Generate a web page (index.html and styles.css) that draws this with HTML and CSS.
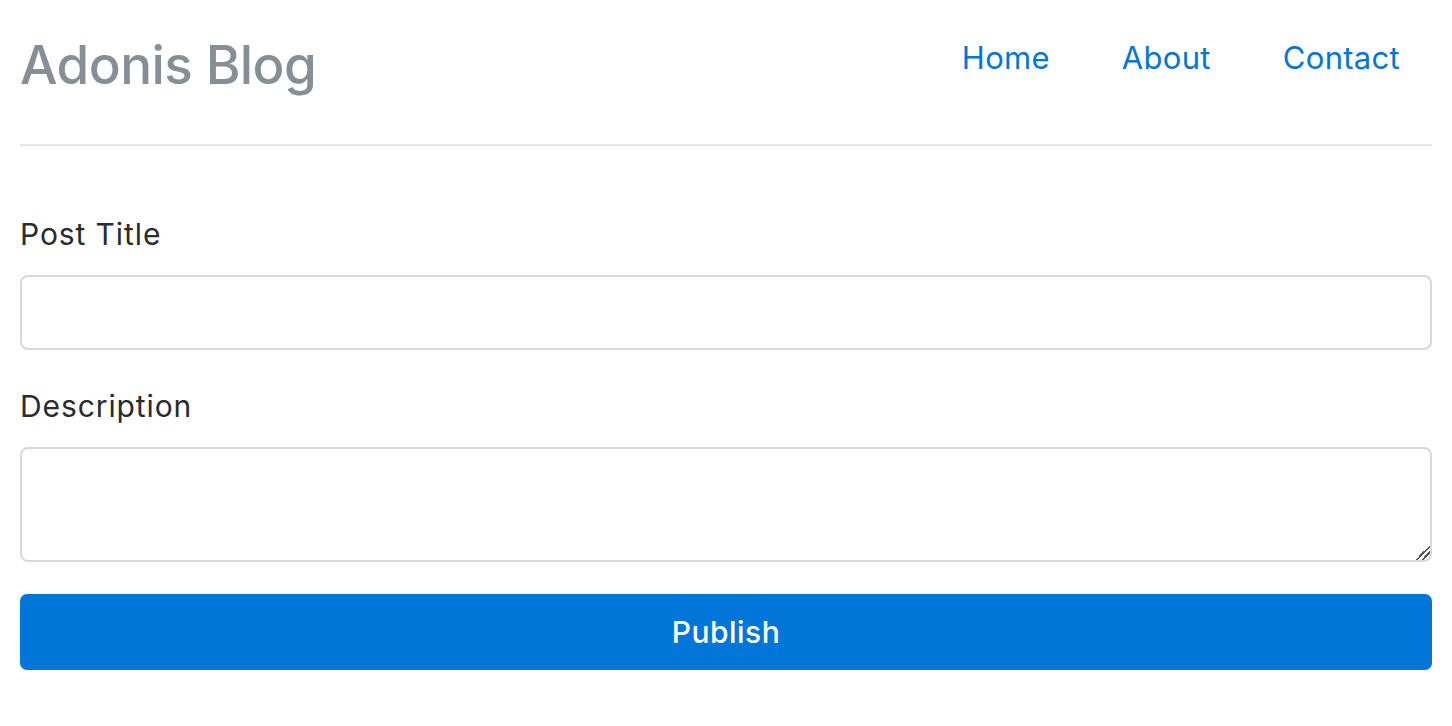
FILE: index.html
```html
<!DOCTYPE html>
<html>
<head>
<meta charset="utf-8">
<title>Adonis Blog</title>
<link rel="stylesheet" href="styles.css">
</head>
<body>
<div class="container">
  <header class="header">
    <h3 class="brand">Adonis Blog</h3>
    <nav class="nav">
      <a href="#" class="nav-link">Home</a>
      <a href="#" class="nav-link">About</a>
      <a href="#" class="nav-link">Contact</a>
    </nav>
  </header>
  <form class="form">
    <div class="group">
      <label class="label">Post Title</label>
      <input type="text" class="control">
    </div>
    <div class="group">
      <label class="label">Description</label>
      <textarea class="control area"></textarea>
    </div>
    <button type="button" class="btn">Publish</button>
  </form>
</div>
</body>
</html>
```
FILE: styles.css
```css
html, body {
  margin: 0;
  padding: 0;
  background: #fff;
}
body {
  font-family: Inter, "Noto Sans", "Liberation Sans", sans-serif;
  color: #292b2c;
}
.container {
  padding: 0 20px;
}
.header {
  display: flex;
  justify-content: space-between;
  align-items: flex-start;
  border-bottom: 2px solid #e5e5e5;
  height: 146px;
  box-sizing: border-box;
}
.brand {
  margin: 34px 0 0;
  font-size: 53px;
  font-weight: 500;
  line-height: 1.2;
  color: #868e96;
  letter-spacing: -0.6px;
}
.nav {
  display: flex;
  margin-top: 39px;
  margin-right: 32px;
  gap: 72px;
}
.nav-link {
  color: #0275d8;
  text-decoration: none;
  font-size: 31px;
  line-height: 1.2;
  letter-spacing: 0.3px;
}
.form {
  padding-top: 66px;
  display: flex;
  flex-direction: column;
}
.group {
  display: flex;
  flex-direction: column;
  margin-bottom: 34px;
}
.group + .group {
  margin-bottom: 32px;
}
.label {
  font-size: 30px;
  line-height: 44px;
  margin-bottom: 19px;
  letter-spacing: 0.9px;
}
.control {
  display: block;
  width: 100%;
  box-sizing: border-box;
  height: 75px;
  border: 2px solid #d9d9d9;
  border-radius: 8px;
  padding: 16px 24px;
  font-size: 30px;
  font-family: inherit;
  outline: none;
  margin: 0;
}
.area {
  height: 115px;
  resize: vertical;
}
.area::-webkit-resizer {
  background: linear-gradient(135deg,
    transparent 0%, transparent 50%,
    #555 50%, #555 58%,
    transparent 58%, transparent 70%,
    #555 70%, #555 78%,
    transparent 78%);
}
.btn {
  display: block;
  width: 100%;
  height: 76px;
  margin-top: 0;
  border: none;
  border-radius: 7px;
  background: #0275d8;
  color: #fff;
  font-family: inherit;
  font-size: 30px;
  font-weight: 500;
  letter-spacing: 0.5px;
  cursor: pointer;
}
```
